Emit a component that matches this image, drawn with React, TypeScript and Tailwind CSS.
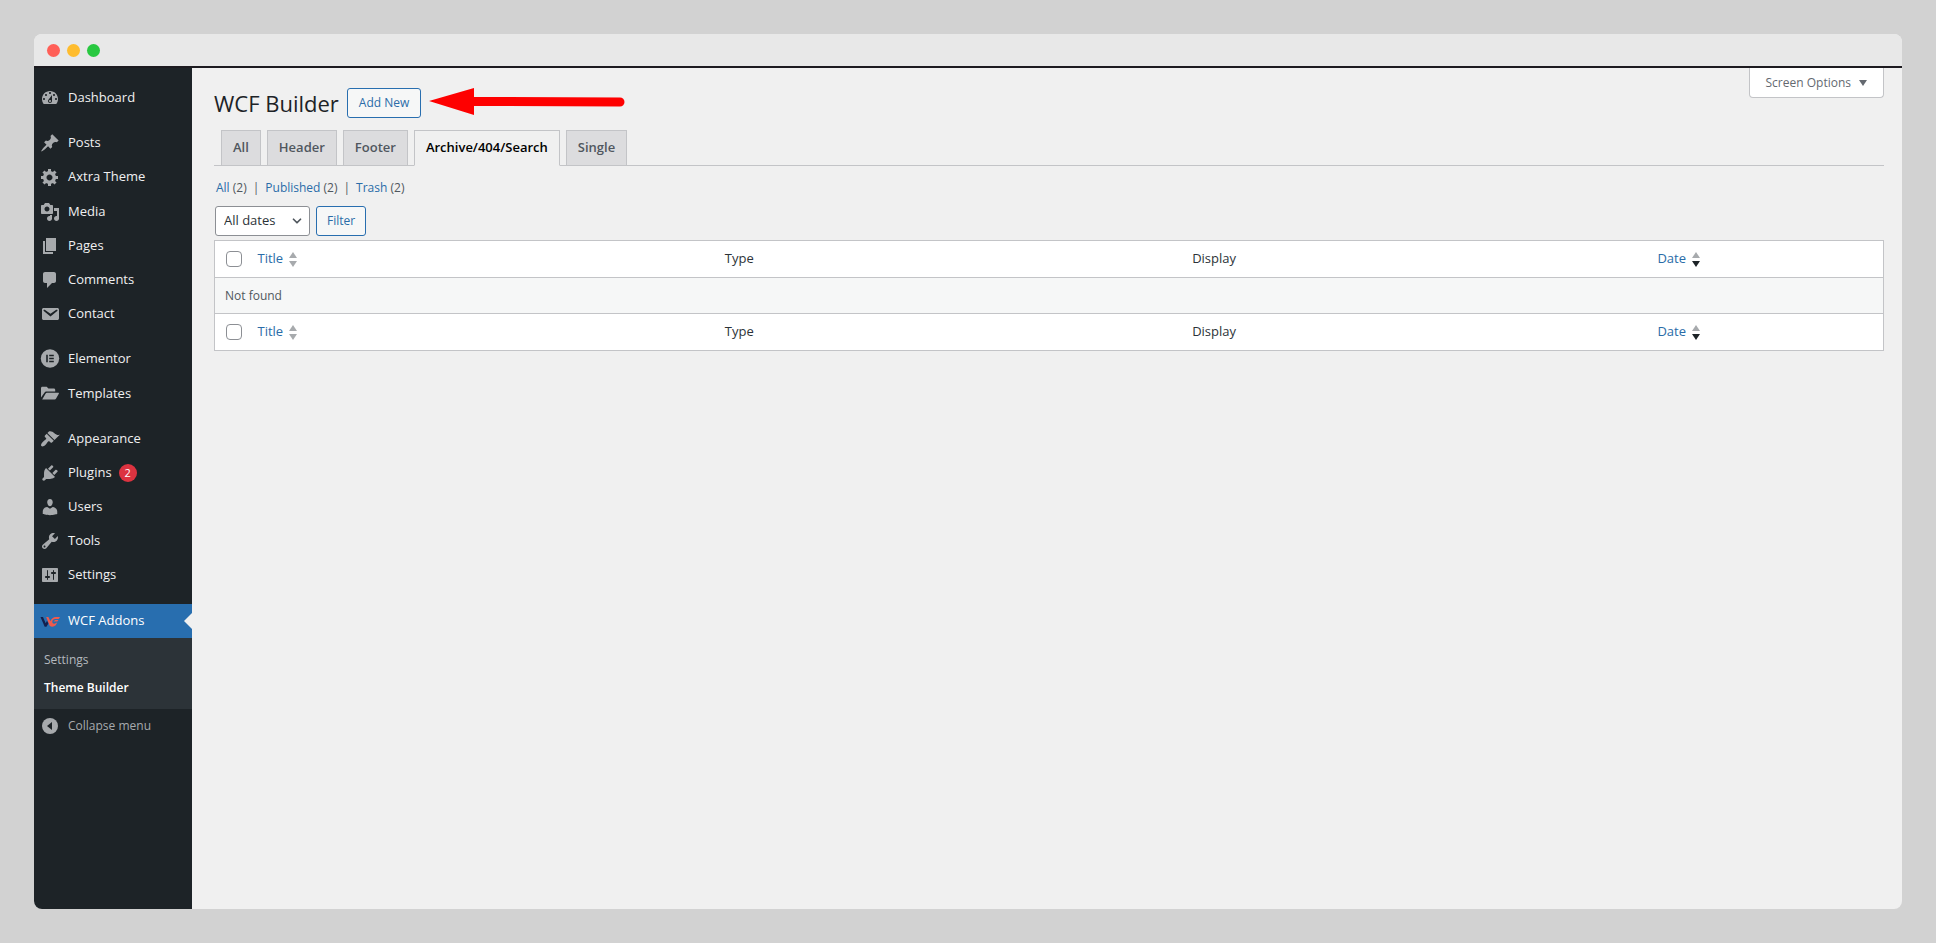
import { ChevronDown } from "lucide-react";
import type { ReactNode } from "react";

type MenuItem = {
    label: string;
    icon: ReactNode;
    count?: number;
    tall?: boolean;
};

const Dashicon = ({ d }: { d: string }) => (
    <svg viewBox="0 0 20 20" width="20" height="20" fill="currentColor" aria-hidden="true">
        <path fillRule="evenodd" d={d} />
    </svg>
);

const ElementorIcon = () => (
    <svg viewBox="0 0 20 20" width="20" height="20" aria-hidden="true">
        <circle cx="10" cy="9.5" r="9.2" fill="currentColor" />
        <path d="M6.2 5.700h1.6v7.600H6.200zM9.200 5.700h4.600v1.500H9.200zM9.200 8.700h4.600v1.500H9.200zM9.200 11.800h4.600v1.500H9.200z" fill="#1d2327" />
    </svg>
);

const TemplatesIcon = () => (
    <svg viewBox="0 0 20 20" width="20" height="20" fill="currentColor" aria-hidden="true">
        <path d="M1 13.6V4.2C1 3.4 1.6 2.8 2.4 2.8h4.3l1.7 1.8h5.4c.8 0 1.4.6 1.4 1.4v1.6H6.600c-.9 0-1.700.5-2.200 1.200z" />
        <path d="M2.2 15.4l3.3-5.7c.3-.6.9-.9 1.5-.9h11.3c.5 0 .8.6.5 1l-2.700 4.700c-.3.600-.9.900-1.500.9z" />
    </svg>
);

const WcfIcon = () => (
    <svg viewBox="0 0 20 20" width="20" height="20" fill="none" aria-hidden="true">
        <path d="M.5 5.900h2.500l2.700 6.400 1.300-2.600 1.400 2.900-2 3.200H4.700z" fill="#131f4d" />
        <path d="M6.200 5.900h2.200l2 4.300c.9-2.700 2.900-4.300 5.600-4.300h4l-1.300 2h-3.400c-1.800 0-3 1.300-3 2.900 0 1.800 1.700 2.600 3.700 1.300l1.300-.8-1.500 3c-1.900 1.600-4.500 1.800-6.100.4z" fill="#f15a4c" />
        <path d="M13.400 10.600h3.900l1.100-1.700h-3.200z" fill="#f15a4c" />
    </svg>
);

const CollapseIcon = () => (
    <svg viewBox="0 0 20 20" width="20" height="20" aria-hidden="true">
        <circle cx="10" cy="10" r="8" fill="currentColor" />
        <path d="M12 6v8l-5-4z" fill="#1d2327" />
    </svg>
);

const menu: MenuItem[][] = [
    [
        {
            label: "Dashboard",
            icon: <Dashicon d="M3.76 16h12.48c1.1-1.37 1.76-3.11 1.76-5 0-4.42-3.58-8-8-8s-8 3.58-8 8c0 1.89.66 3.63 1.76 5zM10 4c.55 0 1 .45 1 1s-.45 1-1 1-1-.45-1-1 .45-1 1-1zM6 6c.55 0 1 .45 1 1s-.45 1-1 1-1-.45-1-1 .45-1 1-1zm8 0c.55 0 1 .45 1 1s-.45 1-1 1-1-.45-1-1 .45-1 1-1zm-5.37 5.55L12 7v6c0 1.1-.9 2-2 2s-2-.9-2-2c0-.57.24-1.08.63-1.45zM4 10c.55 0 1 .45 1 1s-.45 1-1 1-1-.45-1-1 .45-1 1-1zm12 0c.55 0 1 .45 1 1s-.45 1-1 1-1-.45-1-1 .45-1 1-1zm-5 3c0-.55-.45-1-1-1s-1 .45-1 1 .45 1 1 1 1-.45 1-1z" />,
        },
    ],
    [
        {
            label: "Posts",
            icon: <Dashicon d="M10.44 3.02l1.82-1.82 6.36 6.35-1.83 1.82c-1.05-.68-2.48-.57-3.41.36l-.75.75c-.92.93-1.04 2.35-.35 3.41l-1.83 1.82-2.41-2.41-2.8 2.79c-.42.42-3.38 2.71-3.8 2.29s1.86-3.39 2.28-3.81l2.79-2.79L4.1 9.36l1.83-1.82c1.05.69 2.48.57 3.4-.36l.75-.75c.93-.92 1.05-2.35.36-3.41z" />,
        },
        {
            label: "Axtra Theme",
            tall: true,
            icon: <Dashicon d="M18 12h-2.18c-.17.7-.44 1.35-.81 1.93l1.54 1.54-2.1 2.1-1.54-1.54c-.58.36-1.23.63-1.91.79V19H8v-2.18c-.68-.16-1.33-.43-1.91-.79l-1.54 1.54-2.12-2.12 1.54-1.54c-.36-.58-.63-1.23-.79-1.91H1V9.03h2.17c.16-.7.44-1.35.8-1.94L2.43 5.55l2.1-2.1 1.54 1.54c.58-.37 1.24-.64 1.93-.81V2h3v2.18c.68.16 1.33.43 1.91.79l1.54-1.54 2.12 2.12-1.54 1.54c.36.59.64 1.24.8 1.94H18V12zm-8.5 1.5c1.66 0 3-1.34 3-3s-1.34-3-3-3-3 1.34-3 3 1.34 3 3 3z" />,
        },
        {
            label: "Media",
            icon: <Dashicon d="M13 11V4c0-.55-.45-1-1-1h-1.67L9 1H5L3.67 3H2c-.55 0-1 .45-1 1v7c0 .55.45 1 1 1h10c.55 0 1-.45 1-1zM7 4.5c1.38 0 2.5 1.12 2.5 2.5S8.38 9.5 7 9.5 4.5 8.38 4.5 7 5.62 4.5 7 4.5zM14 6h5v10.5c0 1.38-1.12 2.5-2.5 2.5S14 17.88 14 16.5s1.12-2.5 2.5-2.5c.17 0 .34.02.5.05V9h-3V6zm-4 8.05V13h2v3.5c0 1.38-1.12 2.5-2.5 2.5S7 17.88 7 16.5 8.12 14 9.5 14c.17 0 .34.02.5.05z" />,
        },
        { label: "Pages", icon: <Dashicon d="M6 15V2h10v13H6zm-1 1h8v2H3V5h2v11z" /> },
        {
            label: "Comments",
            icon: <Dashicon d="M5 2h9c1.1 0 2 .9 2 2v7c0 1.1-.9 2-2 2h-2l-5 5v-5H5c-1.1 0-2-.9-2-2V4c0-1.1.9-2 2-2z" />,
        },
        {
            label: "Contact",
            icon: <Dashicon d="M3.87 4h13.25C18.37 4 19 4.59 19 5.79v8.42c0 1.19-.63 1.79-1.88 1.79H3.87c-1.25 0-1.88-.6-1.88-1.79V5.79c0-1.2.63-1.79 1.88-1.79zm6.62 8.6l6.74-5.53c.24-.2.43-.66.13-1.07-.29-.41-.82-.42-1.17-.17l-5.7 3.86L4.8 5.83c-.35-.25-.88-.24-1.17.17-.3.41-.11.87.13 1.07z" />,
        },
    ],
    [
        { label: "Elementor", icon: <ElementorIcon />, tall: true },
        { label: "Templates", icon: <TemplatesIcon /> },
    ],
    [
        {
            label: "Appearance",
            icon: <Dashicon d="M14.48 11.06L7.41 3.99l1.5-1.5c.5-.56 2.3-.47 3.51.32 1.21.8 1.43 1.28 2.91 2.1 1.18.64 2.45 1.26 4.45.85zm-.71.71L6.7 4.7 4.93 6.47c-.39.39-.39 1.02 0 1.41l1.06 1.06c.39.39.39 1.03 0 1.42-.6.6-1.43 1.11-2.21 1.69-.35.26-.7.53-1.01.84C1.43 14.23.4 16.08 1.4 17.07c.99 1 2.84-.03 4.18-1.36.31-.31.58-.66.85-1.02.57-.78 1.08-1.61 1.69-2.21.39-.39 1.02-.39 1.41 0l1.06 1.06c.39.39 1.02.39 1.41 0z" />,
        },
        {
            label: "Plugins",
            count: 2,
            icon: <Dashicon d="M13.11 4.36L9.87 7.6 8 5.73l3.24-3.24c.35-.34 1.05-.2 1.56.32.52.51.66 1.21.31 1.55zm-8 1.77l.91-1.12 9.01 9.01-1.19.84c-.71.71-2.63 1.16-3.82 1.16H6.14L4.9 17.26c-.59.59-1.54.59-2.12 0-.59-.58-.59-1.53 0-2.12l1.24-1.24v-3.88c0-1.13.4-3.19 1.09-3.89zm7.26 3.97l3.24-3.24c.34-.35 1.04-.21 1.55.31.52.51.66 1.21.31 1.55l-3.24 3.25z" />,
        },
        {
            label: "Users",
            icon: <Dashicon d="M10 9.25c-2.27 0-2.73-3.44-2.73-3.44C7 4.02 7.82 2 9.97 2c2.16 0 2.98 2.02 2.71 3.81 0 0-.41 3.44-2.68 3.44zm0 2.57L12.72 10c2.39 0 4.52 2.33 4.52 4.53v2.49s-3.65 1.13-7.24 1.13c-3.65 0-7.24-1.13-7.24-1.13v-2.49c0-2.25 1.94-4.48 4.47-4.48z" />,
        },
        {
            label: "Tools",
            icon: <Dashicon d="M16.68 9.77c-1.34 1.34-3.3 1.67-4.95.99l-5.41 6.52c-.99.99-2.59.99-3.58 0s-.99-2.59 0-3.57l6.52-5.42c-.68-1.65-.35-3.61.99-4.95 1.28-1.28 3.12-1.62 4.72-1.06l-2.89 2.89 2.82 2.82 2.86-2.87c.53 1.58.18 3.39-1.08 4.65zM3.81 16.21c.4.39 1.04.39 1.43 0 .4-.4.4-1.04 0-1.43-.39-.4-1.03-.4-1.43 0-.39.39-.39 1.03 0 1.43z" />,
        },
        {
            label: "Settings",
            icon: <Dashicon d="M18 16V4c0-.55-.45-1-1-1H3c-.55 0-1 .45-1 1v12c0 .55.45 1 1 1h14c.55 0 1-.45 1-1zM8 11h1c.55 0 1 .45 1 1s-.45 1-1 1H8v1.5c0 .28-.22.5-.5.5s-.5-.22-.5-.5V13H6c-.55 0-1-.45-1-1s.45-1 1-1h1V5.5c0-.28.22-.5.5-.5s.5.22.5.5V11zm5-2h-1c-.55 0-1-.45-1-1s.45-1 1-1h1V5.5c0-.28.22-.5.5-.5s.5.22.5.5V7h1c.55 0 1 .45 1 1s-.45 1-1 1h-1v5.5c0 .28-.22.5-.5.5s-.5-.22-.5-.5V9z" />,
        },
    ],
];

const tabs = ["All", "Header", "Footer", "Archive/404/Search", "Single"];
const views = ["All", "Published", "Trash"];

function Sidebar() {
    return (
        <nav aria-label="Main menu" className="w-[158px] shrink-0 bg-[#1d2327] pt-[13px] text-[13px] text-[#f0f0f1]">
            {menu.map((group, i) => (
                <ul key={i} className="mb-[11px]">
                    {group.map(item => (
                        <li key={item.label}>
                            <a href="#" className={`flex items-center pl-1.5 ${item.tall ? "h-[35px] pb-px" : "h-[34px]"}`}>
                                <span className="mr-2 text-[#a7aaad]">{item.icon}</span>
                                {item.label}
                                {item.count && (
                                    <span className="ml-[7px] flex size-[18px] items-center justify-center rounded-full bg-[#dc3340] text-[11px] text-white">
                                        {item.count}
                                    </span>
                                )}
                            </a>
                        </li>
                    ))}
                </ul>
            ))}

            <a href="#" className="mt-3 flex h-[34px] items-center bg-[#286eaf] pl-1.5 text-white">
                <span className="mr-2"><WcfIcon /></span>
                WCF Addons
                <span className="ml-auto border-y-8 border-r-8 border-y-transparent border-r-[#f0f0f0]" />
            </a>
            <ul className="bg-[#2c3338] px-2.5 pb-[7px] pt-2 text-[12px]">
                <li><a href="#" className="flex h-7 items-center text-[#b4b9be]">Settings</a></li>
                <li><a href="#" className="flex h-7 items-center font-semibold text-white">Theme Builder</a></li>
            </ul>
            <button type="button" className="flex h-[34px] w-full items-center pl-1.5 text-[12px] text-[#a7aaad]">
                <span className="mr-2"><CollapseIcon /></span>
                Collapse menu
            </button>
        </nav>
    );
}

function SortLink({ label, desc = false }: { label: string; desc?: boolean }) {
    return (
        <a href="#" className="inline-flex items-center gap-1.5 text-[#2a6ca8]">
            {label}
            <svg viewBox="0 0 8 15" width="8" height="15" aria-hidden="true">
                <path d="M4 0l4 6H0z" fill="#a7aaad" />
                <path d="M4 15L0 9h8z" fill={desc ? "#1d2327" : "#a7aaad"} />
            </svg>
        </a>
    );
}

function HeadingRow({ place }: { place: string }) {
    return (
        <tr className="h-[37px] text-left text-[#2c3338]">
            <td className="w-[35px] pl-[11px]">
                <input
                    type="checkbox"
                    aria-label={`Select all (${place})`}
                    className="block size-4 appearance-none rounded-sm border border-[#8c8f94] bg-white"
                />
            </td>
            <th scope="col" className="w-[28%] px-2 font-normal"><SortLink label="Title" /></th>
            <th scope="col" className="w-[28%] px-2 font-normal">Type</th>
            <th scope="col" className="w-[28%] px-2 font-normal">Display</th>
            <th scope="col" className="px-1.5 font-normal"><SortLink label="Date" desc /></th>
        </tr>
    );
}

function BuilderTable() {
    return (
        <table className="mt-1 w-full table-fixed border-collapse border border-[#c3c4c7] bg-white text-[13px]">
            <thead>
                <HeadingRow place="top" />
            </thead>
            <tbody>
                <tr className="h-9 border-y border-[#c3c4c7] bg-[#f6f7f7]">
                    <td colSpan={5} className="px-2.5 text-[12px] text-[#50575e]">Not found</td>
                </tr>
            </tbody>
            <tfoot>
                <HeadingRow place="bottom" />
            </tfoot>
        </table>
    );
}

export default function App() {
    return (
        <div className="flex min-h-screen flex-col bg-[#d2d2d2] p-[34px] font-['Open_Sans','Noto_Sans',sans-serif]">
            <div className="flex flex-1 flex-col overflow-hidden rounded-lg bg-[#f0f0f0]">
                <div className="flex h-[34px] items-center gap-[7px] border-b-2 border-[#1d1b20] bg-[#e8e8e8] pl-[13px]">
                    <span className="size-[13px] rounded-full bg-[#ff5f57]" />
                    <span className="size-[13px] rounded-full bg-[#febc2e]" />
                    <span className="size-[13px] rounded-full bg-[#28c840]" />
                </div>

                <div className="flex flex-1">
                    <Sidebar />

                    <main className="min-w-0 flex-1 pl-[22px] pr-[18px]">
                        <header className="flex items-start justify-between">
                            <div className="flex items-start pt-5">
                                <h1 className="text-[22px] leading-[30px] text-[#1d2327]">WCF Builder</h1>
                                <a href="#" className="ml-2 flex h-[30px] items-center rounded-[3px] border border-[#286eaf] bg-[#f6f7f7] px-[11px] text-[12px] text-[#2a6ca8]">
                                    Add New
                                </a>
                                <svg viewBox="0 0 196 27" width="196" height="27" className="ml-2" aria-hidden="true">
                                    <path d="M0 13L45 0v9l146 .5a4.5 4.5 0 0 1 0 9L45 18v9z" fill="#fe0000" />
                                </svg>
                            </div>
                            <button type="button" className="flex h-[30px] items-center gap-2 rounded-b border border-t-0 border-[#c3c4c7] bg-white px-4 text-[12px] text-[#646970]">
                                Screen Options
                                <span className="border-x-4 border-t-[6px] border-x-transparent border-t-[#646970]" />
                            </button>
                        </header>

                        <nav aria-label="Template types" className="mt-3 flex gap-1.5 border-b border-[#c3c4c7] pl-[7px]">
                            {tabs.map(tab => (
                                <a
                                    key={tab}
                                    href="#"
                                    className={`-mb-px flex h-9 items-center border border-[#c3c4c7] px-[11px] text-[13px] font-semibold
                                        ${tab === "Archive/404/Search"
                                            ? "border-b-[#f0f0f0] bg-[#f0f0f0] text-black"
                                            : "bg-[#dcdcde] text-[#50575e]"}`}
                                >
                                    {tab}
                                </a>
                            ))}
                        </nav>

                        <ul className="mt-3 flex pl-0.5 text-[12px] leading-5 text-[#50575e]">
                            {views.map((view, i) => (
                                <li key={view}>
                                    {i > 0 && <span className="mx-1.5">|</span>}
                                    <a href="#" className="text-[#2a6ca8]">{view}</a> (2)
                                </li>
                            ))}
                        </ul>

                        <form className="mt-2 flex gap-1.5 pl-px" onSubmit={e => e.preventDefault()}>
                            <div className="relative">
                                <select
                                    aria-label="Filter by date"
                                    className="h-[30px] w-[95px] appearance-none rounded-[3px] border border-[#8c8f94] bg-white pl-2 text-[13px] text-[#2c3338]"
                                >
                                    <option>All dates</option>
                                </select>
                                <ChevronDown size={14} strokeWidth={3} className="pointer-events-none absolute right-1.5 top-2 text-[#50575e]" />
                            </div>
                            <button type="submit" className="h-[30px] rounded-[3px] border border-[#286eaf] bg-[#f6f7f7] px-2.5 text-[12px] text-[#2a6ca8]">
                                Filter
                            </button>
                        </form>

                        <BuilderTable />
                    </main>
                </div>
            </div>
        </div>
    );
}
